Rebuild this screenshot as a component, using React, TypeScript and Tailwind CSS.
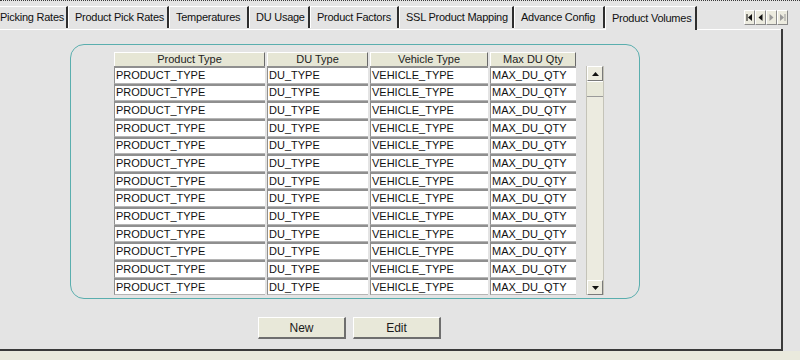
import React from 'react';

const TABS = [
  { label: 'Picking Rates', w: 68, cut: true },
  { label: 'Product Pick Rates', w: 101 },
  { label: 'Temperatures', w: 80 },
  { label: 'DU Usage', w: 61 },
  { label: 'Product Factors', w: 89 },
  { label: 'SSL Product Mapping', w: 115 },
  { label: 'Advance Config', w: 91 },
];

const COLS = [
  { title: 'Product Type', w: 151, value: 'PRODUCT_TYPE' },
  { title: 'DU Type', w: 101, value: 'DU_TYPE' },
  { title: 'Vehicle Type', w: 118, value: 'VEHICLE_TYPE' },
  { title: 'Max DU Qty', w: 86, value: 'MAX_DU_QTY' },
];

const ROWS = Array.from({ length: 13 }, (_, i) => i);

function NavButton({ kind, disabled }: { kind: 'first' | 'prev' | 'next' | 'last'; disabled?: boolean }) {
  const c = disabled ? '#9a9a9a' : '#111';
  return (
    <div className="w-[11px] h-[15px] bg-[#ecebdf] border-t border-l border-white border-r border-b border-r-[#8a8a8a] border-b-[#8a8a8a] flex items-center justify-center">
      <svg width="7" height="7" viewBox="0 0 7 7">
        {kind === 'first' && (
          <>
            <rect x="0.5" y="0" width="1" height="7" fill={c} />
            <polygon points="6,0 2,3.5 6,7" fill={c} />
          </>
        )}
        {kind === 'prev' && <polygon points="5.5,0 1.5,3.5 5.5,7" fill={c} />}
        {kind === 'next' && <polygon points="1.5,0 5.5,3.5 1.5,7" fill={c} />}
        {kind === 'last' && (
          <>
            <polygon points="1,0 5,3.5 1,7" fill={c} />
            <rect x="5.5" y="0" width="1" height="7" fill={c} />
          </>
        )}
      </svg>
    </div>
  );
}

function Arrow({ up }: { up?: boolean }) {
  return (
    <div className="h-[15px] shrink-0 bg-[#ecebdf] border-t border-l border-white border-r border-b border-r-[#7a7a7a] border-b-[#7a7a7a] flex items-center justify-center">
      <svg width="7" height="4" viewBox="0 0 7 4">
        <polygon points={up ? '0,4 3.5,0 7,4' : '0,0 3.5,4 7,0'} fill="#111" />
      </svg>
    </div>
  );
}

function Button({ label }: { label: string }) {
  return (
    <div className="w-[88px] h-[22px] bg-[#e8e8d9] border-t border-l border-white border-r-2 border-b-2 border-r-[#6e6e6e] border-b-[#6e6e6e] flex items-center justify-center text-[12px] text-[#1a1a1a]">
      {label}
    </div>
  );
}

export default function App() {
  return (
    <div className="w-[800px] h-[360px] bg-[#e4e4e4] overflow-hidden flex flex-col font-['Liberation_Sans',Arial,sans-serif] text-[11px] text-[#111]">
      <div className="h-px shrink-0 border-t border-dotted border-[#3a3a3a]" />

      {/* tab strip */}
      <div className="h-[28px] shrink-0 flex items-end tracking-[-0.25px]">
        {TABS.map((t) => (
          <div
            key={t.label}
            style={{ width: t.w }}
            className={`h-[22px] mb-px shrink-0 whitespace-nowrap overflow-hidden flex items-center ${t.cut ? 'pl-0' : 'pl-[6px] border-l border-l-white'} border-r-2 border-r-[#2e2e2e] border-t border-t-white`}
          >
            {t.label}
          </div>
        ))}
        <div className="w-[92px] h-[24px] shrink-0 whitespace-nowrap flex items-center pl-[6px] bg-[#e4e4e4] border-t border-l border-white border-r-2 border-r-[#2e2e2e] -mb-px relative z-10">
          Product Volumes
        </div>
        <div className="flex-1 flex justify-end self-start pt-[9px] pr-[12px]">
          <div className="flex">
            <NavButton kind="first" />
            <NavButton kind="prev" />
            <NavButton kind="next" disabled />
            <NavButton kind="last" disabled />
          </div>
        </div>
      </div>

      {/* main panel */}
      <div className="flex shrink-0 h-[320px]">
        <div className="w-[781px] border-t border-t-white pt-[14px] pl-[70px]">
          <div className="w-[570px] h-[255px] rounded-[14px] border border-[#5aaeae] pt-[7px] pl-[43px] flex gap-[10px]">
            <div className="flex flex-col">
              <div className="flex gap-[2px] h-[14px]">
                {COLS.map((c) => (
                  <div
                    key={c.title}
                    style={{ width: c.w }}
                    className="h-[14px] bg-[#e6e6d5] border-t border-l border-white border-r border-r-[#6a6a6a] flex items-center justify-center leading-none text-[#222]"
                  >
                    {c.title}
                  </div>
                ))}
              </div>
              {ROWS.map((r) => (
                <div key={r} className="flex gap-[2px] h-[17.65px]">
                  {COLS.map((c) => (
                    <div
                      key={c.title}
                      style={{ width: c.w }}
                      className="h-full bg-white border-t-2 border-t-[#8f8f8f] border-l border-l-[#8f8f8f] border-b border-b-[#b5b5b5] flex items-center pl-px leading-none whitespace-nowrap overflow-hidden"
                    >
                      {c.value}
                    </div>
                  ))}
                </div>
              ))}
            </div>

            {/* scrollbar */}
            <div className="w-[18px] h-[229px] mt-[14px] flex flex-col bg-[#ecebe0] border-l border-r border-[#c4c3b8]">
              <Arrow up />
              <div className="h-[16px] bg-[#e8e8d9] border-t border-white border-b border-b-[#9a9a9a]" />
              <div className="flex-1" />
              <Arrow />
            </div>
          </div>

          <div className="flex gap-[7px] mt-[18px] pl-[188px]">
            <Button label="New" />
            <Button label="Edit" />
          </div>
        </div>
        <div className="w-[2px] bg-[#3a3a3a]" />
      </div>
      <div className="w-[783px] h-[2px] shrink-0 bg-[#3a3a3a]" />

      <div className="flex-1 bg-[#eaeadd]" />
    </div>
  );
}
